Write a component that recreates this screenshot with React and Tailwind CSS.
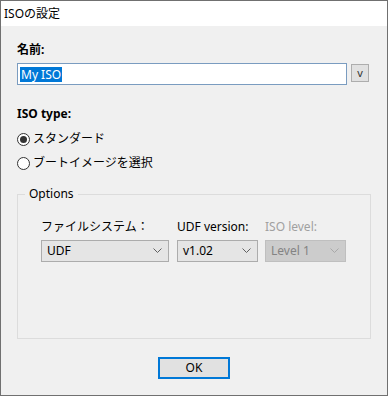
import React from "react";

const font = { fontFamily: '"Segoe UI", "Noto Sans", "Noto Sans CJK JP", sans-serif' };

function Chevron({ color = "#606060" }) {
  return (
    <svg width="9" height="6" viewBox="0 0 9 6" className="shrink-0">
      <polyline points="0.5,0.5 4.5,4.5 8.5,0.5" fill="none" stroke={color} strokeWidth="1" />
    </svg>
  );
}

function Select({ value, width, disabled }) {
  return (
    <div
      className={
        "h-[22px] flex items-center justify-between pl-[5px] pr-[6px] border " +
        (disabled
          ? "bg-[#cccccc] border-[#bfbfbf] text-[#838383]"
          : "bg-[#e5e5e5] border-[#acacac] text-black")
      }
      style={{ width }}
    >
      <span>{value}</span>
      <Chevron color={disabled ? "#a8a8a8" : "#606060"} />
    </div>
  );
}

function Radio({ checked, label }) {
  return (
    <div className="h-[24px] flex items-center">
      <div className="w-[13px] h-[13px] rounded-full border border-[#333333] bg-white flex items-center justify-center">
        {checked && <div className="w-[7px] h-[7px] rounded-full bg-[#333333]" />}
      </div>
      <span className="ml-[3px]">{label}</span>
    </div>
  );
}

export default function App() {
  return (
    <div
      className="w-[388px] h-[396px] border border-[#707070] bg-[#f0f0f0] flex flex-col text-[12px] leading-[16px] text-black"
      style={font}
    >
      <div className="h-[25px] bg-white flex items-center pl-[3px]">ISOの設定</div>
      <div className="flex flex-col pl-[16px]">
        <div className="mt-[16px] font-bold">名前:</div>
        <div className="mt-[5px] flex items-start">
          <div className="w-[330px] h-[22px] bg-white border border-[#7a9cc0] flex items-center pl-[2px]">
            <span className="bg-[#0078d7] text-white px-[1px] leading-[15px]">My ISO</span>
          </div>
          <div className="ml-[4px] mt-[1px] w-[18px] h-[18px] bg-[#e1e1e1] border border-[#adadad] flex items-center justify-center text-[11px] text-[#333]">
            v
          </div>
        </div>
        <div className="mt-[21px] font-bold">ISO type:</div>
        <div className="mt-[5px]">
          <Radio checked label="スタンダード" />
          <Radio label="ブートイメージを選択" />
        </div>
        <fieldset className="mt-[11px] w-[354px] h-[153px] border border-[#dcdcdc] p-0 m-0">
          <legend className="ml-[7px] px-[4px]">Options</legend>
          <div className="pl-[23px] mt-[17px] flex gap-[8px]">
            <div className="flex flex-col gap-[5px]">
              <div>ファイルシステム：</div>
              <Select value="UDF" width={128} />
            </div>
            <div className="flex flex-col gap-[5px]">
              <div>UDF version:</div>
              <Select value="v1.02" width={81} />
            </div>
            <div className="flex flex-col gap-[5px] ml-[-1px]">
              <div className="text-[#a0a0a0]">ISO level:</div>
              <Select value="Level 1" width={81} disabled />
            </div>
          </div>
        </fieldset>
      </div>
      <div className="flex justify-center mt-[18px]">
        <div className="w-[72px] h-[22px] border-2 border-[#0078d7] bg-[#e1e1e1] flex items-center justify-center">
          OK
        </div>
      </div>
    </div>
  );
}
